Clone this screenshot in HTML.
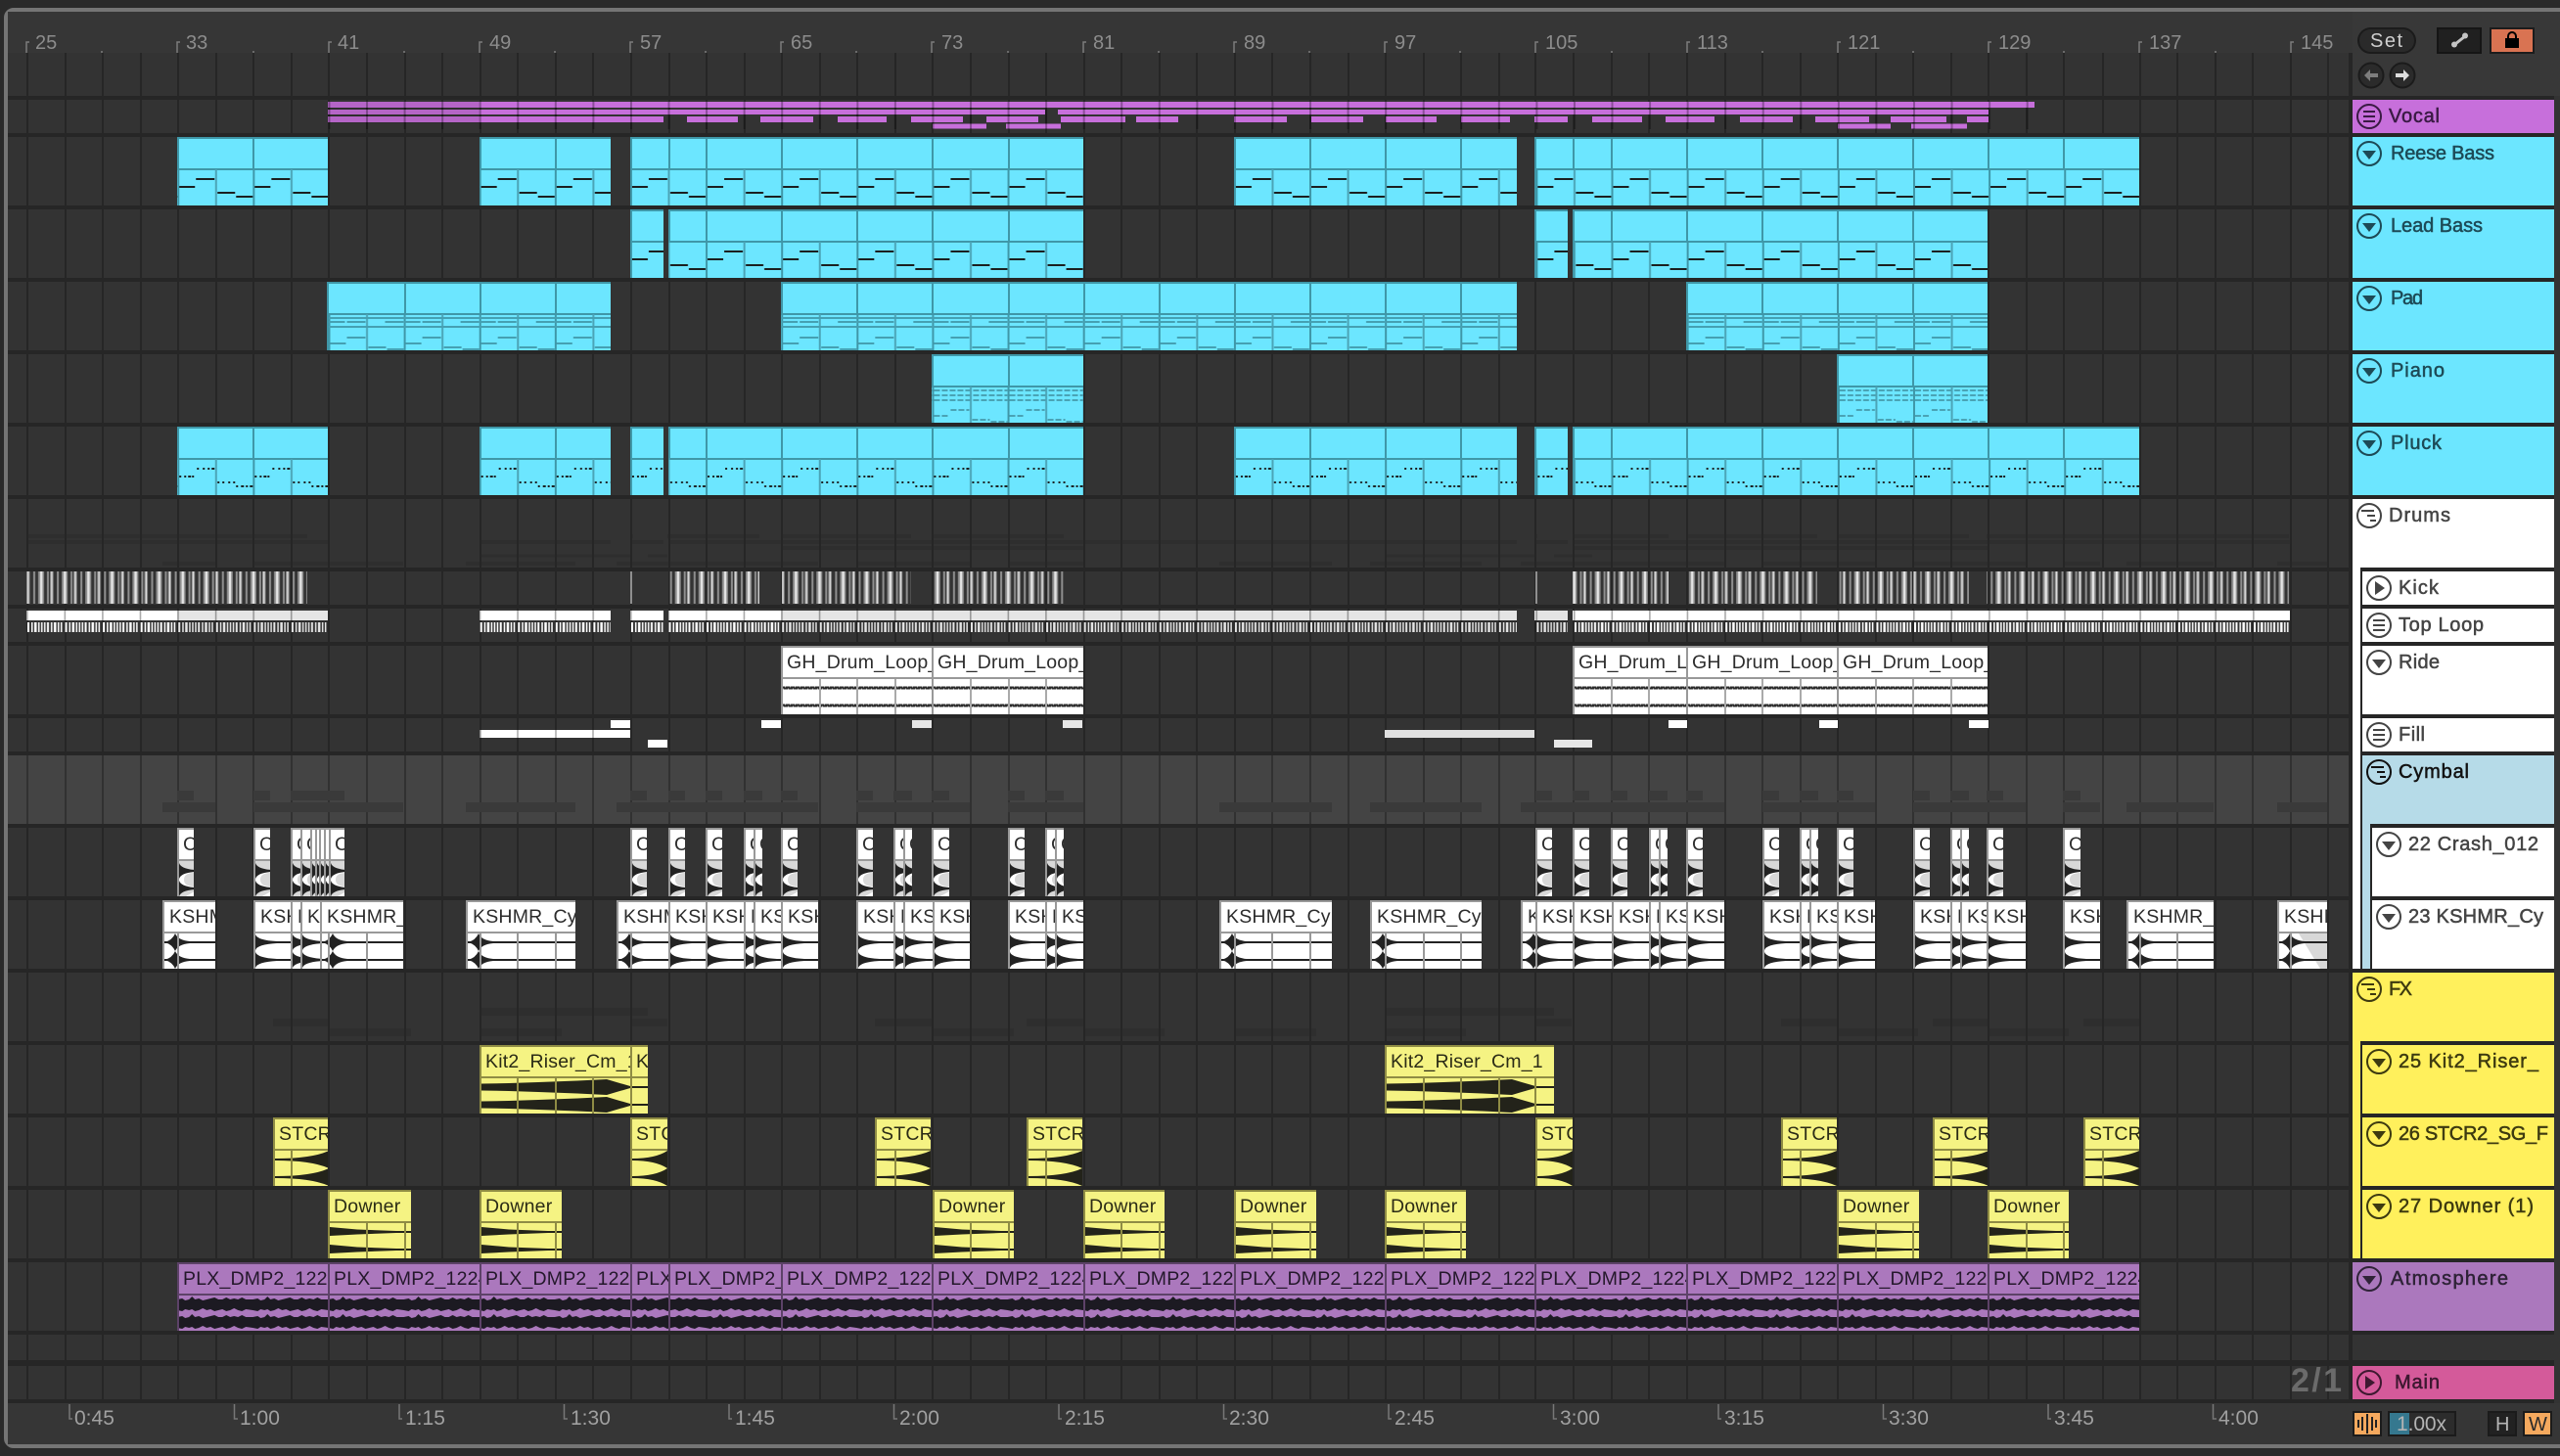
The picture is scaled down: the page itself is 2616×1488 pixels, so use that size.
<!DOCTYPE html>
<html><head><meta charset="utf-8"><title>Arrangement</title>
<style>
html,body{margin:0;padding:0;background:#2a2a2a;width:2616px;height:1488px;overflow:hidden}
svg{display:block}
text{font-family:"Liberation Sans",sans-serif;font-size:19.5px}
.c{letter-spacing:.2px;fill:#2c2c2c}
.y{letter-spacing:.2px;fill:#2b2b16}
.p{letter-spacing:.2px;fill:#24182b}
.r{fill:#8c8c8c;font-size:20px}
.b{fill:#a0a0a0;font-size:21px}
.h{font-size:20px;stroke-width:.5px;paint-order:stroke}
</style></head><body>
<svg width="2616" height="1488" viewBox="0 0 2616 1488" xmlns="http://www.w3.org/2000/svg">
<defs>
<pattern id="gl" patternUnits="userSpaceOnUse" x="27" y="0" width="38.56" height="10"><rect width="2" height="10" fill="#000" opacity=".3"/></pattern>
<pattern id="nR" patternUnits="userSpaceOnUse" x="27" y="0" width="77.12" height="70">
<rect width="78" height="70" fill="#6ce6ff"/><rect width="78" height="2" fill="#3f97a8"/><rect y="32" width="78" height="2" fill="#3f97a8"/>
<rect y="33" width="2" height="37" fill="#3f97a8"/><rect x="38.56" y="33" width="2" height="37" fill="#4ba4b6"/>
<g fill="#1b1f20"><rect x="2" y="50" width="16" height="2"/><rect x="19" y="42" width="19" height="2"/><rect x="41" y="56" width="18" height="2"/><rect x="60" y="60" width="17" height="2"/></g>
</pattern>
<pattern id="nP" patternUnits="userSpaceOnUse" x="27" y="0" width="77.12" height="70">
<rect width="78" height="70" fill="#6ce6ff"/><rect width="78" height="2" fill="#3f97a8"/><rect y="32" width="78" height="2" fill="#3f97a8"/>
<rect y="33" width="2" height="37" fill="#3f97a8"/><rect x="38.56" y="33" width="2" height="37" fill="#4ba4b6"/>
<g fill="#1b2224"><path d="M2 50h2v2h-2zM7 50h2v2h-2zM11 50h3v2h-3zM15 50h2v2h-2zM20 42h2v2h-2zM26 42h2v2h-2zM31 42h2v2h-2zM35 42h3v2h-3zM41 56h2v2h-2zM46 56h2v2h-2zM52 56h2v2h-2zM57 56h2v2h-2zM60 60h2v2h-2zM65 60h3v2h-3zM70 60h2v2h-2zM74 60h3v2h-3z"/></g>
</pattern>
<pattern id="nD" patternUnits="userSpaceOnUse" x="27" y="0" width="77.12" height="70">
<rect width="78" height="70" fill="#6ce6ff"/><rect width="78" height="2" fill="#3f97a8"/><rect y="32" width="78" height="2" fill="#3f97a8"/>
<rect y="33" width="2" height="37" fill="#3f97a8"/><rect x="38.56" y="33" width="2" height="37" fill="#4ba4b6"/>
<g fill="#45a0b2"><rect y="36" width="78" height="2"/><rect y="40" width="17" height="2"/><rect x="19" y="40" width="19" height="2"/><rect x="58" y="40" width="19" height="2"/><rect y="45" width="78" height="2"/>
<rect x="19" y="56" width="19" height="2"/><rect x="2" y="62" width="16" height="2"/><rect x="41" y="66" width="18" height="2"/><rect x="60" y="68" width="17" height="2"/></g>
</pattern>
<pattern id="nI" patternUnits="userSpaceOnUse" x="27" y="0" width="77.12" height="70">
<rect width="78" height="70" fill="#6ce6ff"/><rect width="78" height="2" fill="#3f97a8"/><rect y="32" width="78" height="2" fill="#3f97a8"/>
<rect y="33" width="2" height="37" fill="#3f97a8"/><rect x="38.56" y="33" width="2" height="37" fill="#4ba4b6"/>
<g fill="none" stroke="#4aa3b5" stroke-width="2" stroke-dasharray="6 2"><path d="M2 37H77M2 42H77M2 47H77"/><path d="M19 57H38M2 63H18M41 67H59M60 69H77"/></g>
</pattern>
<pattern id="kb" patternUnits="userSpaceOnUse" x="27" y="0" width="24.1" height="34">
<g fill="#8f8f8f"><rect width="3.5" height="33"/><rect x="7" width="2" height="33"/><rect x="12" width="6" height="33"/><rect x="21" width="2" height="33"/></g>
<g fill="#e4e4e4"><rect x="1.2" width="1.2" height="33"/><rect x="14" width="2.4" height="33"/></g>
</pattern>
<pattern id="tl" patternUnits="userSpaceOnUse" x="27" y="0" width="38.56" height="34">
<rect y="2" width="39" height="10" fill="#fff"/><rect y="2" width="1.6" height="10" fill="#aaa"/>
<g fill="#fff"><rect x="1" y="14" width="2" height="10"/><rect x="5" y="14" width="1.5" height="10"/><rect x="8" y="14" width="2.5" height="10"/><rect x="12" y="14" width="1.5" height="10"/><rect x="15" y="14" width="1.5" height="10"/><rect x="18" y="14" width="1.5" height="10"/><rect x="21" y="14" width="2" height="10"/><rect x="25" y="14" width="1.5" height="10"/><rect x="28" y="14" width="2.5" height="10"/><rect x="32" y="14" width="1.5" height="10"/><rect x="35" y="14" width="1.5" height="10"/></g>
</pattern>
<pattern id="gh" patternUnits="userSpaceOnUse" x="0" y="0" width="5" height="70">
<rect y="41.5" width="5" height="3" fill="#2b2b2b"/><rect y="59.5" width="5" height="3" fill="#2b2b2b"/><rect x="4" y="41.5" width="1" height="1" fill="#aaa"/><rect x="2" y="43.5" width="1" height="1" fill="#aaa"/><rect x="4" y="59.5" width="1" height="1" fill="#aaa"/><rect x="2" y="61.5" width="1" height="1" fill="#aaa"/>
</pattern>
<pattern id="pw" patternUnits="userSpaceOnUse" x="27" y="0" width="77.12" height="70">
<g fill="#1c1a22"><path id="pn" d="M0 38L5 37L8 39L12 38L15 35L18 38L22 37L26 39L30 38L34 37L38 36L42 38L46 38L50 36L54 38L58 37L62 38L66 36L70 38L77.12 38V49L70 48L66 50L62 49L58 47L54 49L50 50L46 48L42 49L38 50L34 48L30 49L26 47L22 49L18 50L15 48L12 49L8 48L5 50L0 49Z"/><use href="#pn" y="18"/></g>
</pattern>
<pattern id="mt" patternUnits="userSpaceOnUse" x="15" y="0" width="56.17" height="10"><rect width="2" height="4" fill="#777"/></pattern>

<g id="wc"><rect width="500" height="70" fill="#fff"/><rect width="500" height="2" fill="#999"/><rect y="32" width="500" height="2" fill="#999"/><rect width="2" height="70" fill="#999"/></g>
<g id="kd"><use href="#wc"/><g fill="#222"><rect x="2" y="42" width="300" height="2"/><rect x="2" y="60" width="300" height="2"/><path id="kdp" d="M2 43Q10 41 13 34Q16 41 28 42Q40 42.500 70 42V44Q40 43.500 28 44Q16 45 13 52Q10 45 2 43Z"/><use href="#kdp" y="18"/></g></g>
<g id="kt"><use href="#wc"/><g fill="#222"><rect x="2" y="42" width="300" height="2"/><rect x="2" y="60" width="300" height="2"/><path id="ktp" d="M2 35Q4 41 24 42V44Q4 45 2 51Z"/><use href="#ktp" y="18"/></g></g>
<g id="cw"><use href="#wc"/><rect x="2" y="34" width="40" height="36" fill="#d8d8d8"/><path d="M2 45H18V46Q7 46 7 53Q7 60 18 60V61H2ZM9 70L18 65V70Z" fill="#fff"/><g fill="#222"><path d="M2 36Q4 42 18 43V45Q4 46 2 52Z"/><path d="M2 54Q4 60 18 61V63Q4 64 2 70Z"/></g></g>
<g id="yc"><rect width="500" height="70" fill="#f5f383"/><rect width="500" height="2" fill="#8f8c44"/><rect y="32" width="500" height="2" fill="#8f8c44"/><rect width="2" height="70" fill="#8f8c44"/></g>
<g id="kr"><use href="#yc"/><g fill="#23231a"><path id="krp" d="M2 39.500L30 39L60 38L100 36.500L130 35L140 38L154 42H300V44H154L140 48L130 51L100 49.500L60 48L30 47L2 46.500Z"/><use href="#krp" y="18"/></g></g>
<g id="st"><use href="#yc"/><g fill="#23231a"><path d="M2 42Q40 42 57 34V52Q40 44 2 44Z"/><path d="M2 60Q40 60 57 52V70Q40 62 2 62Z"/></g></g>
<g id="st2"><use href="#yc"/><g fill="#23231a"><path d="M2 42Q26 42 38 34V52Q26 44 2 44Z"/><path d="M2 60Q26 60 38 52V70Q26 62 2 62Z"/></g></g>
<g id="dw"><use href="#yc"/><g fill="#23231a"><path d="M2 38L30 40.500L70 42H300V44H70L30 45.500L2 47Z"/><path d="M2 56L30 58.500L70 60H300V62H70L30 63.500L2 65Z"/></g></g>
<g id="pc"><rect width="500" height="34" fill="#ab78bd"/><rect width="500" height="2" fill="#5d4268"/><rect y="32" width="500" height="2" fill="#5d4268"/><rect width="2" height="70" fill="#5d4268"/></g>

<g id="id"><circle r="12" fill="none" stroke="currentColor" stroke-width="2"/><path d="M-7-3H7L0 6Z" fill="currentColor"/></g>
<g id="ip"><circle r="12" fill="none" stroke="currentColor" stroke-width="2"/><path d="M-4-7V7L6 0Z" fill="currentColor"/></g>
<g id="im"><circle r="12" fill="none" stroke="currentColor" stroke-width="2"/><path d="M-6-5H6M-6 0H6M-6 5H6" stroke="currentColor" stroke-width="2"/></g>
<g id="if"><circle r="12" fill="none" stroke="currentColor" stroke-width="2"/><path d="M-8-5H5M-2 0H6M1 5H7" stroke="currentColor" stroke-width="2"/></g>
</defs>

<rect width="2616" height="1488" fill="#2a2a2a"/>
<rect x="6" y="10" width="2630" height="1468" rx="8" fill="#363636" stroke="#757575" stroke-width="4"/>

<!-- track area -->
<rect x="8" y="54" width="2392" height="1376" fill="#333"/>
<rect x="8" y="772" width="2392" height="70" fill="#3a3a3a"/>
<!-- ghost lanes -->
<g fill="none" stroke="#2e2e2e">
<path stroke-width="4" d="M27 548H314M645 548H647M682 548H776M799 548H931M953 548H1087M1569 548H1571M1607 548H1705M1724 548H1857M1877 548H2012M2030 548H2339"/>
<path stroke-width="4" d="M27 554H335M490 554H624M644 554H678M683 554H1550M1569 554H1602M1607 554H2340"/>
<path stroke-width="4" d="M798 560H1107M1608 560H2032"/>
<path stroke-width="3" d="M490 568H644M624 568H644M662 568H682M1415 568H1568M1588 568H1627"/>
<path stroke-width="4" d="M166 576H220M259 576H412M476 576H588M630 576H836M875 576H991M1030 576H1107M1246 576H1361M1400 576H1514M1554 576H1762M1801 576H1916M1955 576H2070M2108 576H2146M2173 576H2262M2327 576H2378"/>
<path stroke-width="8" d="M490 1034H662M1415 1034H1588"/>
<path stroke-width="8" d="M279 1045H335M645 1045H682M894 1045H952M1049 1045H1107M1569 1045H1606M1820 1045H1878M1975 1045H2032M2129 1045H2186"/>
<path stroke-width="8" d="M335 1055H420M490 1055H574M952 1055H1036M1107 1055H1190M1261 1055H1345M1415 1055H1498M1878 1055H1960M2032 1055H2114"/>
</g>
<!-- separators -->
<path fill="#262626" d="M8 98h2396v4H8zM8 136h2396v4H8zM8 210h2396v4H8zM8 284h2396v4H8zM8 358h2396v4H8zM8 432h2396v4H8zM8 506h2396v4H8zM8 580h2396v4H8zM8 618h2396v4H8zM8 656h2396v4H8zM8 730h2396v4H8zM8 768h2396v4H8zM8 842h2396v4H8zM8 916h2396v4H8zM8 990h2396v4H8zM8 1064h2396v4H8zM8 1138h2396v4H8zM8 1212h2396v4H8zM8 1286h2396v4H8zM8 1360h2396v4H8zM8 1390h2396v6H8zM8 1430h2396v4H8z"/>
<rect x="2400" y="54" width="4" height="1380" fill="#262626"/>
<!-- grid -->
<path id="grid" fill="none" stroke="#262626" stroke-width="2" d="M28 54V1430M67 54V1430M105 54V1430M144 54V1430M182 54V1430M221 54V1430M259 54V1430M298 54V1430M336 54V1430M375 54V1430M414 54V1430M452 54V1430M491 54V1430M529 54V1430M568 54V1430M606 54V1430M645 54V1430M684 54V1430M722 54V1430M761 54V1430M799 54V1430M838 54V1430M876 54V1430M915 54V1430M953 54V1430M992 54V1430M1031 54V1430M1069 54V1430M1108 54V1430M1146 54V1430M1185 54V1430M1223 54V1430M1262 54V1430M1300 54V1430M1339 54V1430M1378 54V1430M1416 54V1430M1455 54V1430M1493 54V1430M1532 54V1430M1569 54V1430M1608 54V1430M1647 54V1430M1685 54V1430M1724 54V1430M1763 54V1430M1801 54V1430M1840 54V1430M1878 54V1430M1917 54V1430M1955 54V1430M1994 54V1430M2032 54V1430M2071 54V1430M2109 54V1430M2149 54V1430M2187 54V1430M2225 54V1430M2264 54V1430M2302 54V1430M2341 54V1430M2379 54V1430"/>
<!-- cymbal lighten + ghost -->
<rect x="8" y="772" width="2392" height="70" fill="#fff" opacity=".05"/>
<g fill="none" stroke="#3a3a3a" stroke-width="10">
<path d="M181 813H198M259 813H276M297 813H352M644 813H661M683 813H700M721 813H738M760 813H779M798 813H815M875 813H892M913 813H932M952 813H970M1030 813H1047M1068 813H1087M1569 813H1586M1607 813H1624M1646 813H1663M1685 813H1704M1723 813H1740M1801 813H1818M1839 813H1858M1877 813H1894M1955 813H1972M1993 813H2012M2030 813H2047M2108 813H2126"/>
<path d="M166 825H220M259 825H412M476 825H588M630 825H836M875 825H991M1030 825H1107M1246 825H1361M1400 825H1514M1554 825H1762M1801 825H1916M1955 825H2070M2108 825H2146M2173 825H2262M2327 825H2378"/>
</g>

<!-- top ruler -->
<rect x="8" y="12" width="2392" height="42" fill="#363636"/>
<g fill="none" stroke="#7c7c7c" stroke-width="1.5"><path d="M27 54V43H30M181 54V43H184M336 54V43H339M490 54V43H493M644 54V43H647M798 54V43H801M952 54V43H955M1107 54V43H1110M1261 54V43H1264M1415 54V43H1418M1569 54V43H1572M1724 54V43H1727M1878 54V43H1881M2032 54V43H2035M2186 54V43H2189M2341 54V43H2344"/><path d="M104 52V54M259 52V54M413 52V54M567 52V54M721 52V54M875 52V54M1030 52V54M1184 52V54M1338 52V54M1492 52V54M1647 52V54M1801 52V54M1955 52V54M2109 52V54M2264 52V54"/></g>
<g><text class="r" x="36" y="50">25</text><text class="r" x="190" y="50">33</text><text class="r" x="345" y="50">41</text><text class="r" x="500" y="50">49</text><text class="r" x="654" y="50">57</text><text class="r" x="808" y="50">65</text><text class="r" x="962" y="50">73</text><text class="r" x="1117" y="50">81</text><text class="r" x="1271" y="50">89</text><text class="r" x="1425" y="50">97</text><text class="r" x="1579" y="50">105</text><text class="r" x="1734" y="50">113</text><text class="r" x="1888" y="50">121</text><text class="r" x="2042" y="50">129</text><text class="r" x="2196" y="50">137</text><text class="r" x="2351" y="50">145</text></g>

<!-- vocal -->
<g fill="none" stroke="#c76fdb">
<path stroke-width="6" d="M335 107H2079"/>
<path stroke-width="5" d="M335 114.500H1068M1081 114.500H2032"/>
<path stroke-width="6" d="M335 122H678M702 122H754M777 122H831M856 122H906M931 122H984M1008 122H1061M1084 122H1150M1161 122H1204M1261 122H1315M1340 122H1393M1416 122H1468M1493 122H1543M1568 122H1602M1627 122H1678M1702 122H1752M1778 122H1832M1855 122H1910M1932 122H1989M2010 122H2032"/>
<path stroke-width="5" d="M953 129H1008M1028 129H1084M1878 129H1932M1953 129H2010"/>
</g>
<rect x="335" y="104" width="155" height="22" fill="#000" opacity=".09"/>
<rect x="335" y="104" width="1745" height="28" fill="url(#gl)"/>

<!-- reese -->
<g transform="translate(0,140)">
<g fill="url(#nR)"><rect x="181" width="154" height="70"/><rect x="490" width="134" height="70"/><rect x="644" width="463" height="70"/><rect x="1261" width="289" height="70"/><rect x="1568" width="618" height="70"/></g>
<path stroke="#3f97a8" stroke-width="2" d="M182 0V34M259 0V34M491 0V34M568 0V34M645 0V34M684 0V34M722 0V34M799 0V34M876 0V34M953 0V34M1031 0V34M1262 0V34M1339 0V34M1416 0V34M1493 0V34M1569 0V70M1608 0V34M1647 0V34M1724 0V34M1801 0V34M1878 0V34M1955 0V34M2032 0V34M2109 0V34"/>
</g>
<!-- lead -->
<g transform="translate(0,214)">
<g fill="url(#nR)"><rect x="644" width="34" height="70"/><rect x="683" width="424" height="70"/><rect x="1568" width="34" height="70"/><rect x="1607" width="424" height="70"/></g>
<path stroke="#3f97a8" stroke-width="2" d="M645 0V34M684 0V34M722 0V34M799 0V34M876 0V34M953 0V34M1031 0V34M1569 0V70M1608 0V70M1647 0V34M1724 0V34M1801 0V34M1878 0V34M1955 0V34"/>
</g>
<!-- pad -->
<g transform="translate(0,288)">
<g fill="url(#nD)"><rect x="334" width="290" height="70"/><rect x="798" width="752" height="70"/><rect x="1723" width="308" height="70"/></g>
<path stroke="#3f97a8" stroke-width="2" d="M335 0V70M414 0V34M491 0V34M568 0V34M799 0V34M876 0V34M953 0V34M1031 0V34M1108 0V34M1185 0V34M1262 0V34M1339 0V34M1416 0V34M1493 0V34M1724 0V70M1801 0V34M1878 0V34M1955 0V34"/>
</g>
<!-- piano -->
<g transform="translate(0,362)">
<g fill="url(#nI)"><rect x="952" width="155" height="70"/><rect x="1877" width="154" height="70"/></g>
<path stroke="#3f97a8" stroke-width="2" d="M953 0V34M1031 0V34M1878 0V70M1955 0V34"/>
</g>
<!-- pluck -->
<g transform="translate(0,436)">
<g fill="url(#nP)"><rect x="181" width="154" height="70"/><rect x="490" width="134" height="70"/><rect x="644" width="34" height="70"/><rect x="683" width="424" height="70"/><rect x="1261" width="289" height="70"/><rect x="1568" width="34" height="70"/><rect x="1607" width="579" height="70"/></g>
<path stroke="#3f97a8" stroke-width="2" d="M182 0V34M259 0V34M491 0V34M568 0V34M645 0V34M684 0V34M722 0V34M799 0V34M876 0V34M953 0V34M1031 0V34M1262 0V34M1339 0V34M1416 0V34M1493 0V34M1569 0V70M1608 0V70M1647 0V34M1724 0V34M1801 0V34M1878 0V34M1955 0V34M2032 0V34M2109 0V34"/>
</g>
<!-- kick -->
<g transform="translate(0,584)" fill="url(#kb)"><rect x="27" width="287" height="33"/><rect x="682" width="94" height="33"/><rect x="799" width="132" height="33"/><rect x="953" width="134" height="33"/><rect x="1607" width="98" height="33"/><rect x="1724" width="133" height="33"/><rect x="1877" width="135" height="33"/><rect x="2030" width="309" height="33"/></g>
<path stroke="#8f8f8f" stroke-width="2" d="M645 584V617M1570 584V617"/>
<!-- top loop -->
<g transform="translate(0,622)">
<g fill="url(#tl)"><rect x="27" width="308" height="34"/><rect x="490" width="134" height="34"/><rect x="644" width="34" height="34"/><rect x="683" width="867" height="34"/><rect x="1568" width="34" height="34"/><rect x="1607" width="733" height="34"/></g>
<g fill="#000" opacity=".1"><rect x="181" y="2" width="154" height="22"/><rect x="798" y="2" width="752" height="22"/><rect x="1568" y="2" width="34" height="22"/></g>
</g>
<!-- ride -->
<g transform="translate(0,660)">
<svg x="798" width="154" height="70"><use href="#wc"/><rect x="2" y="34" width="152" height="36" fill="url(#gh)"/><text class="c" x="6" y="23">GH_Drum_Loop_1</text></svg>
<svg x="952" width="155" height="70"><use href="#wc"/><rect x="2" y="34" width="153" height="36" fill="url(#gh)"/><text class="c" x="6" y="23">GH_Drum_Loop_1</text></svg>
<svg x="1607" width="117" height="70"><use href="#wc"/><rect x="2" y="34" width="115" height="36" fill="url(#gh)"/><text class="c" x="6" y="23">GH_Drum_Loop_1</text></svg>
<svg x="1723" width="154" height="70"><use href="#wc"/><rect x="2" y="34" width="152" height="36" fill="url(#gh)"/><text class="c" x="6" y="23">GH_Drum_Loop_1</text></svg>
<svg x="1877" width="154" height="70"><use href="#wc"/><rect x="2" y="34" width="152" height="36" fill="url(#gh)"/><text class="c" x="6" y="23">GH_Drum_Loop_1</text></svg>
<path stroke="#aaa" stroke-width="2" fill="none" d="M838 34V70M876 34V70M915 34V70M992 34V70M1031 34V70M1069 34V70M1647 34V70M1685 34V70M1763 34V70M1801 34V70M1840 34V70M1917 34V70M1955 34V70M1994 34V70"/>
</g>
<!-- fill -->
<g transform="translate(0,734)" fill="#fff"><rect x="624" y="2" width="20" height="8"/><rect x="491" y="12" width="153" height="8"/><rect x="662" y="22" width="20" height="8"/><rect x="778" y="2" width="20" height="8"/><rect x="932" y="2" width="20" height="8" fill="#e6e6e6"/><rect x="1086" y="2" width="20" height="8" fill="#e6e6e6"/><rect x="1415" y="12" width="153" height="8" fill="#e0e0e0"/><rect x="1588" y="22" width="39" height="8" fill="#e6e6e6"/><rect x="1705" y="2" width="19" height="8"/><rect x="1859" y="2" width="19" height="8"/><rect x="2012" y="2" width="20" height="8"/></g>
<path stroke="#aaa" stroke-width="1.500" d="M491 746V754M529 746V754M568 746V754M606 746V754"/>

<!-- crash -->
<g transform="translate(0,846)">
<svg x="181" width="17" height="70"><use href="#cw"/><text class="c" x="6" y="23">C</text></svg>
<svg x="259" width="17" height="70"><use href="#cw"/><text class="c" x="6" y="23">C</text></svg>
<svg x="297" width="10" height="70"><use href="#cw"/><text class="c" x="6" y="23">C</text></svg>
<svg x="307" width="10" height="70"><use href="#cw"/><text class="c" x="6" y="23">C</text></svg>
<svg x="317" width="5" height="70"><use href="#cw"/></svg>
<svg x="322" width="4" height="70"><use href="#cw"/></svg>
<svg x="326" width="5" height="70"><use href="#cw"/></svg>
<svg x="331" width="5" height="70"><use href="#cw"/></svg>
<svg x="336" width="16" height="70"><use href="#cw"/><text class="c" x="6" y="23">C</text></svg>
<svg x="644" width="17" height="70"><use href="#cw"/><text class="c" x="6" y="23">C</text></svg>
<svg x="683" width="17" height="70"><use href="#cw"/><text class="c" x="6" y="23">C</text></svg>
<svg x="721" width="17" height="70"><use href="#cw"/><text class="c" x="6" y="23">C</text></svg>
<svg x="760" width="10" height="70"><use href="#cw"/><text class="c" x="6" y="23">C</text></svg>
<svg x="770" width="9" height="70"><use href="#cw"/><text class="c" x="6" y="23">C</text></svg>
<svg x="798" width="17" height="70"><use href="#cw"/><text class="c" x="6" y="23">C</text></svg>
<svg x="875" width="17" height="70"><use href="#cw"/><text class="c" x="6" y="23">C</text></svg>
<svg x="913" width="10" height="70"><use href="#cw"/><text class="c" x="6" y="23">C</text></svg>
<svg x="923" width="9" height="70"><use href="#cw"/><text class="c" x="6" y="23">C</text></svg>
<svg x="952" width="18" height="70"><use href="#cw"/><text class="c" x="6" y="23">C</text></svg>
<svg x="1030" width="17" height="70"><use href="#cw"/><text class="c" x="6" y="23">C</text></svg>
<svg x="1068" width="10" height="70"><use href="#cw"/><text class="c" x="6" y="23">C</text></svg>
<svg x="1078" width="9" height="70"><use href="#cw"/><text class="c" x="6" y="23">C</text></svg>
<svg x="1569" width="17" height="70"><use href="#cw"/><text class="c" x="6" y="23">C</text></svg>
<svg x="1607" width="17" height="70"><use href="#cw"/><text class="c" x="6" y="23">C</text></svg>
<svg x="1646" width="17" height="70"><use href="#cw"/><text class="c" x="6" y="23">C</text></svg>
<svg x="1685" width="10" height="70"><use href="#cw"/><text class="c" x="6" y="23">C</text></svg>
<svg x="1695" width="9" height="70"><use href="#cw"/><text class="c" x="6" y="23">C</text></svg>
<svg x="1723" width="17" height="70"><use href="#cw"/><text class="c" x="6" y="23">C</text></svg>
<svg x="1801" width="17" height="70"><use href="#cw"/><text class="c" x="6" y="23">C</text></svg>
<svg x="1839" width="10" height="70"><use href="#cw"/><text class="c" x="6" y="23">C</text></svg>
<svg x="1849" width="9" height="70"><use href="#cw"/><text class="c" x="6" y="23">C</text></svg>
<svg x="1877" width="17" height="70"><use href="#cw"/><text class="c" x="6" y="23">C</text></svg>
<svg x="1955" width="17" height="70"><use href="#cw"/><text class="c" x="6" y="23">C</text></svg>
<svg x="1993" width="10" height="70"><use href="#cw"/><text class="c" x="6" y="23">C</text></svg>
<svg x="2003" width="9" height="70"><use href="#cw"/><text class="c" x="6" y="23">C</text></svg>
<svg x="2030" width="17" height="70"><use href="#cw"/><text class="c" x="6" y="23">C</text></svg>
<svg x="2108" width="18" height="70"><use href="#cw"/><text class="c" x="6" y="23">C</text></svg>
</g>
<!-- kshmr -->
<g transform="translate(0,920)">
<svg x="166" width="54" height="70"><use href="#kd"/><text class="c" x="7" y="23">KSHMR_Cy</text></svg>
<svg x="259" width="38" height="70"><use href="#kt"/><text class="c" x="7" y="23">KSHMR_Cy</text></svg>
<svg x="297" width="10" height="70"><use href="#kt"/><text class="c" x="7" y="23">KSHMR</text></svg>
<svg x="307" width="20" height="70"><use href="#kt"/><text class="c" x="7" y="23">KSHMR</text></svg>
<svg x="327" width="85" height="70"><use href="#kd"/><text class="c" x="7" y="23">KSHMR_Cy</text></svg>
<svg x="476" width="112" height="70"><use href="#kd"/><text class="c" x="7" y="23">KSHMR_Cy</text></svg>
<svg x="630" width="53" height="70"><use href="#kd"/><text class="c" x="7" y="23">KSHMR_Cy</text></svg>
<svg x="683" width="38" height="70"><use href="#kt"/><text class="c" x="7" y="23">KSHMR</text></svg>
<svg x="721" width="39" height="70"><use href="#kt"/><text class="c" x="7" y="23">KSHMR</text></svg>
<svg x="760" width="10" height="70"><use href="#kt"/><text class="c" x="7" y="23">KSHMR</text></svg>
<svg x="770" width="28" height="70"><use href="#kt"/><text class="c" x="7" y="23">KSHMR</text></svg>
<svg x="798" width="38" height="70"><use href="#kt"/><text class="c" x="7" y="23">KSHMR</text></svg>
<svg x="875" width="38" height="70"><use href="#kt"/><text class="c" x="7" y="23">KSHMR</text></svg>
<svg x="913" width="10" height="70"><use href="#kt"/><text class="c" x="7" y="23">KSHMR</text></svg>
<svg x="923" width="30" height="70"><use href="#kt"/><text class="c" x="7" y="23">KSHMR</text></svg>
<svg x="953" width="38" height="70"><use href="#kt"/><text class="c" x="7" y="23">KSHMR</text></svg>
<svg x="1030" width="38" height="70"><use href="#kt"/><text class="c" x="7" y="23">KSHMR</text></svg>
<svg x="1068" width="10" height="70"><use href="#kt"/><text class="c" x="7" y="23">KSHMR</text></svg>
<svg x="1078" width="29" height="70"><use href="#kt"/><text class="c" x="7" y="23">KSHMR</text></svg>
<svg x="1246" width="115" height="70"><use href="#kd"/><text class="c" x="7" y="23">KSHMR_Cy</text></svg>
<svg x="1400" width="114" height="70"><use href="#kd"/><text class="c" x="7" y="23">KSHMR_Cy</text></svg>
<svg x="1554" width="15" height="70"><use href="#kd"/><text class="c" x="7" y="23">KSHMR</text></svg>
<svg x="1569" width="38" height="70"><use href="#kt"/><text class="c" x="7" y="23">KSHMR</text></svg>
<svg x="1607" width="40" height="70"><use href="#kt"/><text class="c" x="7" y="23">KSHMR</text></svg>
<svg x="1647" width="38" height="70"><use href="#kt"/><text class="c" x="7" y="23">KSHMR</text></svg>
<svg x="1685" width="10" height="70"><use href="#kt"/><text class="c" x="7" y="23">KSHMR</text></svg>
<svg x="1695" width="28" height="70"><use href="#kt"/><text class="c" x="7" y="23">KSHMR</text></svg>
<svg x="1723" width="39" height="70"><use href="#kt"/><text class="c" x="7" y="23">KSHMR</text></svg>
<svg x="1801" width="38" height="70"><use href="#kt"/><text class="c" x="7" y="23">KSHMR</text></svg>
<svg x="1839" width="10" height="70"><use href="#kt"/><text class="c" x="7" y="23">KSHMR</text></svg>
<svg x="1849" width="28" height="70"><use href="#kt"/><text class="c" x="7" y="23">KSHMR</text></svg>
<svg x="1877" width="39" height="70"><use href="#kt"/><text class="c" x="7" y="23">KSHMR</text></svg>
<svg x="1955" width="38" height="70"><use href="#kt"/><text class="c" x="7" y="23">KSHMR</text></svg>
<svg x="1993" width="10" height="70"><use href="#kt"/><text class="c" x="7" y="23">KSHMR</text></svg>
<svg x="2003" width="27" height="70"><use href="#kt"/><text class="c" x="7" y="23">KSHMR</text></svg>
<svg x="2030" width="40" height="70"><use href="#kt"/><text class="c" x="7" y="23">KSHMR</text></svg>
<svg x="2108" width="38" height="70"><use href="#kt"/><text class="c" x="7" y="23">KSHMR</text></svg>
<svg x="2173" width="89" height="70"><use href="#kd"/><text class="c" x="7" y="23">KSHMR_Cy</text></svg>
<svg x="2327" width="51" height="70"><use href="#wc"/><path d="M22 34H51V70H44Z" fill="#d8d8d8"/><g fill="#222"><rect x="2" y="42" width="50" height="2"/><rect x="2" y="60" width="50" height="2"/><path d="M2 43Q10 41 13 34Q16 41 28 42H50V44H28Q16 45 13 52Q10 45 2 43Z"/><path d="M2 61Q10 59 13 52Q16 59 28 60H50V62H28Q16 63 13 70Q10 63 2 61Z"/></g><text class="c" x="7" y="23">KSHMR_Cy</text></svg>
<path stroke="#999" stroke-width="2" fill="none" d="M182 34V70M336 34V70M375 34V70M491 34V70M529 34V70M568 34V70M645 34V70M1262 34V70M1300 34V70M1339 34V70M1416 34V70M1455 34V70M1493 34V70M2187 34V70M2225 34V70M2341 34V70"/>
</g>
<!-- kit2 -->
<g transform="translate(0,1068)">
<svg x="490" width="154" height="70"><use href="#kr"/><text class="y" x="6" y="23">Kit2_Riser_Cm_1</text></svg>
<svg x="644" width="18" height="70"><use href="#yc"/><rect x="2" y="42" width="16" height="2" fill="#23231a"/><rect x="2" y="60" width="16" height="2" fill="#23231a"/><text class="y" x="6" y="23">Kit2</text></svg>
<svg x="1415" width="173" height="70"><use href="#kr"/><text class="y" x="6" y="23">Kit2_Riser_Cm_1</text></svg>
<path stroke="#8f8c44" stroke-width="2" fill="none" d="M529 34V70M568 34V70M606 34V70M1455 34V70M1493 34V70M1532 34V70M1569 34V70"/>
</g>
<!-- stcr -->
<g transform="translate(0,1142)">
<svg x="279" width="56" height="70"><use href="#st"/><text class="y" x="6" y="23">STCR2</text></svg>
<svg x="644" width="38" height="70"><use href="#st2"/><text class="y" x="6" y="23">STCR2</text></svg>
<svg x="894" width="57" height="70"><use href="#st"/><text class="y" x="6" y="23">STCR2</text></svg>
<svg x="1049" width="57" height="70"><use href="#st"/><text class="y" x="6" y="23">STCR2</text></svg>
<svg x="1569" width="38" height="70"><use href="#st2"/><text class="y" x="6" y="23">STCR2</text></svg>
<svg x="1820" width="57" height="70"><use href="#st"/><text class="y" x="6" y="23">STCR2</text></svg>
<svg x="1975" width="56" height="70"><use href="#st"/><text class="y" x="6" y="23">STCR2</text></svg>
<svg x="2129" width="57" height="70"><use href="#st"/><text class="y" x="6" y="23">STCR2</text></svg>
<path stroke="#8f8c44" stroke-width="2" fill="none" d="M298 34V70M915 34V70M1069 34V70M1840 34V70M1994 34V70M2149 34V70"/>
</g>
<!-- downer -->
<g transform="translate(0,1216)">
<svg x="335" width="85" height="70"><use href="#dw"/><text class="y" x="6" y="23">Downer</text></svg>
<svg x="490" width="84" height="70"><use href="#dw"/><text class="y" x="6" y="23">Downer</text></svg>
<svg x="953" width="83" height="70"><use href="#dw"/><text class="y" x="6" y="23">Downer</text></svg>
<svg x="1107" width="83" height="70"><use href="#dw"/><text class="y" x="6" y="23">Downer</text></svg>
<svg x="1261" width="84" height="70"><use href="#dw"/><text class="y" x="6" y="23">Downer</text></svg>
<svg x="1415" width="83" height="70"><use href="#dw"/><text class="y" x="6" y="23">Downer</text></svg>
<svg x="1877" width="84" height="70"><use href="#dw"/><text class="y" x="6" y="23">Downer</text></svg>
<svg x="2031" width="83" height="70"><use href="#dw"/><text class="y" x="6" y="23">Downer</text></svg>
<path stroke="#8f8c44" stroke-width="2" fill="none" d="M375 34V70M414 34V70M529 34V70M568 34V70M992 34V70M1031 34V70M1146 34V70M1185 34V70M1300 34V70M1339 34V70M1455 34V70M1493 34V70M1917 34V70M1955 34V70M2071 34V70M2109 34V70"/>
</g>
<!-- atmosphere -->
<g transform="translate(0,1290)">
<rect x="181" y="34" width="2005" height="36" fill="#ab78bd"/>
<rect x="181" y="34" width="2005" height="36" fill="url(#pw)"/>
<svg x="181" width="154" height="34"><use href="#pc"/><text class="p" x="6" y="23">PLX_DMP2_1224</text></svg>
<svg x="335" width="155" height="34"><use href="#pc"/><text class="p" x="6" y="23">PLX_DMP2_1224</text></svg>
<svg x="490" width="154" height="34"><use href="#pc"/><text class="p" x="6" y="23">PLX_DMP2_1224</text></svg>
<svg x="644" width="39" height="34"><use href="#pc"/><text class="p" x="6" y="23">PLX_DMP2</text></svg>
<svg x="683" width="115" height="34"><use href="#pc"/><text class="p" x="6" y="23">PLX_DMP2_1224</text></svg>
<svg x="798" width="154" height="34"><use href="#pc"/><text class="p" x="6" y="23">PLX_DMP2_1224</text></svg>
<svg x="952" width="155" height="34"><use href="#pc"/><text class="p" x="6" y="23">PLX_DMP2_1224</text></svg>
<svg x="1107" width="154" height="34"><use href="#pc"/><text class="p" x="6" y="23">PLX_DMP2_1224</text></svg>
<svg x="1261" width="154" height="34"><use href="#pc"/><text class="p" x="6" y="23">PLX_DMP2_1224</text></svg>
<svg x="1415" width="153" height="34"><use href="#pc"/><text class="p" x="6" y="23">PLX_DMP2_1224</text></svg>
<svg x="1568" width="155" height="34"><use href="#pc"/><text class="p" x="6" y="23">PLX_DMP2_1224</text></svg>
<svg x="1723" width="154" height="34"><use href="#pc"/><text class="p" x="6" y="23">PLX_DMP2_1224</text></svg>
<svg x="1877" width="154" height="34"><use href="#pc"/><text class="p" x="6" y="23">PLX_DMP2_1224</text></svg>
<svg x="2031" width="155" height="34"><use href="#pc"/><text class="p" x="6" y="23">PLX_DMP2_1224</text></svg>
<path stroke="#5d4268" stroke-width="2" fill="none" d="M182 34V70M336 34V70M491 34V70M645 34V70M684 34V70M799 34V70M953 34V70M1108 34V70M1262 34V70M1416 34V70M1569 34V70M1724 34V70M1878 34V70M2032 34V70"/>
</g>

<!-- bottom ruler -->
<rect x="8" y="1434" width="2392" height="42" fill="#363636"/>
<rect x="8" y="1434" width="2392" height="4" fill="url(#mt)"/>
<path stroke="#777" stroke-width="1.500" fill="none" d="M71 1435V1450H74M239.500 1435V1450H243M408 1435V1450H411M576.500 1435V1450H580M745 1435V1450H748M913.500 1435V1450H917M1082 1435V1450H1085M1250.500 1435V1450H1254M1419 1435V1450H1422M1587.500 1435V1450H1591M1756 1435V1450H1759M1924.500 1435V1450H1928M2093 1435V1450H2096M2261.500 1435V1450H2265"/>
<text class="b" x="76" y="1456">0:45</text><text class="b" x="245" y="1456">1:00</text><text class="b" x="414" y="1456">1:15</text><text class="b" x="583" y="1456">1:30</text><text class="b" x="751" y="1456">1:45</text><text class="b" x="919" y="1456">2:00</text><text class="b" x="1088" y="1456">2:15</text><text class="b" x="1256" y="1456">2:30</text><text class="b" x="1425" y="1456">2:45</text><text class="b" x="1594" y="1456">3:00</text><text class="b" x="1762" y="1456">3:15</text><text class="b" x="1930" y="1456">3:30</text><text class="b" x="2099" y="1456">3:45</text><text class="b" x="2267" y="1456">4:00</text>
<text x="2341" y="1422" font-weight="700" style="font-size:34px;fill:#6b6b6b" textLength="52">2/1</text>

<!-- right panel -->
<rect x="2404" y="12" width="212" height="86" fill="#383838"/>
<rect x="2410" y="29" width="58" height="25" rx="12.500" fill="#2a2a2a" stroke="#1b1b1b" stroke-width="2"/>
<text x="2422" y="48" style="font-size:20px;fill:#cfcfcf" textLength="33">Set</text>
<rect x="2491" y="29" width="44" height="25" fill="#202020" stroke="#151515" stroke-width="2"/>
<path d="M2509 45L2519 37" stroke="#c4c4c4" stroke-width="3"/><circle cx="2508" cy="45.500" r="3" fill="#c4c4c4"/><circle cx="2519" cy="36.500" r="3" fill="#c4c4c4"/>
<rect x="2545" y="29" width="44" height="25" fill="#d97352" stroke="#1c1c1c" stroke-width="2"/>
<path d="M2560 39h14v10h-14z" fill="#000"/><path d="M2563 39v-2a4 4 0 0 1 8 0v2" fill="none" stroke="#000" stroke-width="2"/>
<circle cx="2423" cy="77" r="12.500" fill="#2b2b2b" stroke="#1b1b1b" stroke-width="2"/><path d="M2416 77l6-6v4h8v4h-8v4z" fill="#7e7e7e"/>
<circle cx="2455" cy="77" r="12.500" fill="#2b2b2b" stroke="#1b1b1b" stroke-width="2"/><path d="M2462 77l-6-6v4h-8v4h8v4z" fill="#dedede"/>

<rect x="2404" y="98" width="212" height="1340" fill="#262626"/>
<rect x="2610" y="98" width="6" height="1340" fill="#333"/>
<!-- headers -->
<rect x="2404" y="102" width="206" height="34" fill="#c76fdb"/>
<g style="color:#3a1a44"><use href="#im" x="2421" y="119"/></g><text class="h" x="2441" y="125" fill="#3a1a44" stroke="#3a1a44" textLength="52">Vocal</text>
<rect x="2404" y="140" width="206" height="70" fill="#6ce6ff"/>
<g style="color:#1d4a56"><use href="#id" x="2421" y="157"/></g><text class="h" x="2443" y="163" fill="#1d4a56" stroke="#1d4a56" textLength="106">Reese Bass</text>
<rect x="2404" y="214" width="206" height="70" fill="#6ce6ff"/>
<g style="color:#1d4a56"><use href="#id" x="2421" y="231"/></g><text class="h" x="2443" y="237" fill="#1d4a56" stroke="#1d4a56" textLength="94">Lead Bass</text>
<rect x="2404" y="288" width="206" height="70" fill="#6ce6ff"/>
<g style="color:#1d4a56"><use href="#id" x="2421" y="305"/></g><text class="h" x="2443" y="311" fill="#1d4a56" stroke="#1d4a56" textLength="33">Pad</text>
<rect x="2404" y="362" width="206" height="70" fill="#6ce6ff"/>
<g style="color:#1d4a56"><use href="#id" x="2421" y="379"/></g><text class="h" x="2443" y="385" fill="#1d4a56" stroke="#1d4a56" textLength="55">Piano</text>
<rect x="2404" y="436" width="206" height="70" fill="#6ce6ff"/>
<g style="color:#1d4a56"><use href="#id" x="2421" y="453"/></g><text class="h" x="2443" y="459" fill="#1d4a56" stroke="#1d4a56" textLength="52">Pluck</text>

<rect x="2404" y="510" width="206" height="480" fill="#fff"/>
<rect x="2412" y="580" width="198" height="410" fill="#262626"/>
<g style="color:#444"><use href="#if" x="2421" y="527"/></g><text class="h" x="2441" y="533" fill="#444" stroke="#444" textLength="63">Drums</text>
<rect x="2414" y="584" width="196" height="34" fill="#fff"/>
<g style="color:#444"><use href="#ip" x="2431" y="601"/></g><text class="h" x="2451" y="607" fill="#444" stroke="#444" textLength="41">Kick</text>
<rect x="2414" y="622" width="196" height="34" fill="#fff"/>
<g style="color:#444"><use href="#im" x="2431" y="639"/></g><text class="h" x="2451" y="645" fill="#444" stroke="#444" textLength="87">Top Loop</text>
<rect x="2414" y="660" width="196" height="70" fill="#fff"/>
<g style="color:#444"><use href="#id" x="2431" y="677"/></g><text class="h" x="2451" y="683" fill="#444" stroke="#444" textLength="42">Ride</text>
<rect x="2414" y="734" width="196" height="34" fill="#fff"/>
<g style="color:#444"><use href="#im" x="2431" y="751"/></g><text class="h" x="2451" y="757" fill="#444" stroke="#444" textLength="27">Fill</text>
<rect x="2414" y="772" width="196" height="218" fill="#b6dbe8"/>
<rect x="2422" y="842" width="188" height="148" fill="#262626"/>
<g style="color:#111"><use href="#if" x="2431" y="789"/></g><text class="h" x="2451" y="795" fill="#111" stroke="#111" textLength="72">Cymbal</text>
<rect x="2424" y="846" width="186" height="70" fill="#fff"/>
<g style="color:#444"><use href="#id" x="2441" y="863"/></g><text class="h" x="2461" y="869" fill="#444" stroke="#444" textLength="133">22 Crash_012</text>
<rect x="2424" y="920" width="186" height="70" fill="#fff"/>
<g style="color:#444"><use href="#id" x="2441" y="937"/></g><text class="h" x="2461" y="943" fill="#444" stroke="#444" textLength="138">23 KSHMR_Cy</text>

<rect x="2404" y="994" width="206" height="292" fill="#fff05c"/>
<rect x="2412" y="1064" width="198" height="222" fill="#262626"/>
<g style="color:#3d3a10"><use href="#if" x="2421" y="1011"/></g><text class="h" x="2441" y="1017" fill="#3d3a10" stroke="#3d3a10" textLength="24">FX</text>
<rect x="2414" y="1068" width="196" height="70" fill="#fff05c"/>
<g style="color:#3d3a10"><use href="#id" x="2431" y="1085"/></g><text class="h" x="2451" y="1091" fill="#3d3a10" stroke="#3d3a10" textLength="143">25 Kit2_Riser_</text>
<rect x="2414" y="1142" width="196" height="70" fill="#fff05c"/>
<g style="color:#3d3a10"><use href="#id" x="2431" y="1159"/></g><text class="h" x="2451" y="1165" fill="#3d3a10" stroke="#3d3a10" textLength="153">26 STCR2_SG_F</text>
<rect x="2414" y="1216" width="196" height="70" fill="#fff05c"/>
<g style="color:#3d3a10"><use href="#id" x="2431" y="1233"/></g><text class="h" x="2451" y="1239" fill="#3d3a10" stroke="#3d3a10" textLength="138">27 Downer (1)</text>

<rect x="2404" y="1290" width="206" height="70" fill="#ab78bd"/>
<g style="color:#2f2338"><use href="#id" x="2421" y="1307"/></g><text class="h" x="2443" y="1313" fill="#2f2338" stroke="#2f2338" textLength="120">Atmosphere</text>
<rect x="2404" y="1364" width="206" height="26" fill="#333"/>
<rect x="2404" y="1396" width="206" height="34" fill="#d45a9a"/>
<g style="color:#3d1830"><use href="#ip" x="2421" y="1413"/></g><text class="h" x="2447" y="1419" fill="#3d1830" stroke="#3d1830" textLength="46">Main</text>

<!-- bottom right -->
<rect x="2400" y="1434" width="216" height="42" fill="#363636"/>
<rect x="2405" y="1443" width="28" height="24" fill="#f5a95e" stroke="#1b1b1b" stroke-width="2"/>
<path d="M2410 1451v8M2414 1448v14M2419 1445v20M2424 1448v14M2428 1451v8" stroke="#222" stroke-width="2" fill="none"/>
<rect x="2441" y="1443" width="68" height="24" fill="#2c2c2c" stroke="#1b1b1b" stroke-width="2"/>
<rect x="2442" y="1444" width="20" height="22" fill="#35788f"/>
<text x="2449" y="1462" style="font-size:21px;fill:#b4b4b4" textLength="51">1.00x</text>
<rect x="2543" y="1443" width="28" height="24" fill="#222" stroke="#1b1b1b" stroke-width="2"/>
<text x="2550" y="1462" style="font-size:20px;fill:#b4b4b4">H</text>
<rect x="2579" y="1443" width="28" height="24" fill="#f5a95e" stroke="#1b1b1b" stroke-width="2"/>
<text x="2584" y="1462" style="font-size:20px;fill:#2a2a2a">W</text>
</svg>
</body></html>
